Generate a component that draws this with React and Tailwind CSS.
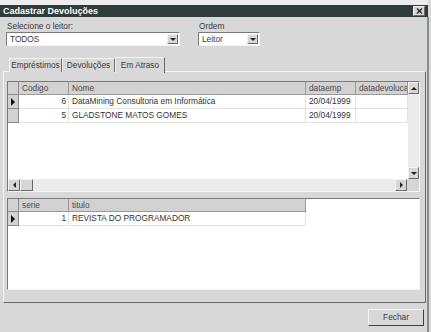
import React from "react";

const raised = "border border-t-[#f4f4f4] border-l-[#f4f4f4] border-r-[#6a6a6a] border-b-[#6a6a6a]";
const sunken = "border border-t-[#7a7a7a] border-l-[#7a7a7a] border-r-[#f4f4f4] border-b-[#f4f4f4]";

function TriDown() {
  return <div className="w-0 h-0 border-x-[3px] border-x-transparent border-t-[3px] border-t-[#222]" />;
}
function TriUp() {
  return <div className="w-0 h-0 border-x-[3px] border-x-transparent border-b-[3px] border-b-[#222]" />;
}
function TriRight({ big }) {
  return big ? (
    <div className="w-0 h-0 border-y-[4px] border-y-transparent border-l-[4px] border-l-[#111]" />
  ) : (
    <div className="w-0 h-0 border-y-[3px] border-y-transparent border-l-[3px] border-l-[#222]" />
  );
}
function TriLeft() {
  return <div className="w-0 h-0 border-y-[3px] border-y-transparent border-r-[3px] border-r-[#222]" />;
}

function Combo({ w, text }) {
  return (
    <div className={`${sunken} h-[14px] bg-white flex items-stretch`} style={{ width: w }}>
      <div className="flex-1 flex items-center pl-[3px] text-[#3a3a3a]">{text}</div>
      <div className={`${raised} w-[11px] bg-[#d6d6d6] flex items-center justify-center m-[1px]`}>
        <TriDown />
      </div>
    </div>
  );
}

function Tab({ label, active, w }) {
  return (
    <div
      className={`${active ? "h-[16px] z-10 -mb-[1px] bg-[#d8d8d8]" : "h-[14px] bg-[#d8d8d8]"} border border-b-0 border-t-[#f4f4f4] border-l-[#f4f4f4] border-r-[#6a6a6a] flex items-center justify-center text-[#3a3a3a]`}
      style={{ width: w }}
    >
      {label}
    </div>
  );
}

function HeadCell({ w, children }) {
  return (
    <div
      className="h-full bg-[#d2d2d2] border-r border-b border-r-[#9a9a9a] border-b-[#9a9a9a] flex items-center pl-[3px] overflow-hidden whitespace-nowrap text-[#4a4a4a]"
      style={{ width: w }}
    >
      {children}
    </div>
  );
}

function Cell({ w, right, children }) {
  return (
    <div
      className={`h-full border-r border-b border-r-[#e2e2e2] border-b-[#e2e2e2] flex items-center overflow-hidden whitespace-nowrap text-[#333] ${right ? "justify-end pr-[2px]" : "pl-[3px]"}`}
      style={{ width: w }}
    >
      {children}
    </div>
  );
}

function Indicator({ head, cur }) {
  return (
    <div className="w-[11px] h-full bg-[#d2d2d2] border-r border-b border-r-[#8a8a8a] border-b-[#8a8a8a] flex items-center justify-center">
      {cur && <TriRight big />}
      {head && null}
    </div>
  );
}

function ScrollBtn({ children, cls }) {
  return (
    <div className={`${raised} bg-[#d6d6d6] flex items-center justify-center ${cls}`}>{children}</div>
  );
}

export default function App() {
  const upperCols = [50, 237, 50, 52];
  return (
    <div
      className="w-[431px] h-[332px] bg-[#d8d8d8] overflow-hidden flex flex-col text-[8.3px] leading-none"
      style={{ fontFamily: '"Liberation Sans", Arial, sans-serif' }}
    >
      <div className="h-[5px] bg-[#ececec] mr-[3px]" />
      <div className="h-[12px] mr-[3px] bg-[#303c3b] flex items-center justify-between pl-[3px] pr-[3px]">
        <span className="text-white font-bold text-[9px]">Cadastrar Devoluções</span>
        <div className={`${raised} w-[12px] h-[10px] bg-[#d6d6d6] flex items-center justify-center`}>
          <svg width="7" height="6" viewBox="0 0 7 6">
            <path d="M1 0.5 L6 5.5 M6 0.5 L1 5.5" stroke="#222" strokeWidth="1.3" />
          </svg>
        </div>
      </div>
      <div className="flex-1 flex flex-col mr-[2px] border-r-[2px] border-r-[#8c8c8c]">
        <div className="flex pl-[6px] pt-[4px]">
          <div className="w-[192px] flex flex-col">
            <div className="h-[10px] flex items-center pl-[1px] mb-[1px] text-[#3a3a3a]">Selecione o leitor:</div>
            <Combo w={174} text="TODOS" />
          </div>
          <div className="flex flex-col">
            <div className="h-[10px] flex items-center pl-[1px] mb-[1px] text-[#3a3a3a]">Ordem</div>
            <Combo w={62} text="Leitor" />
          </div>
        </div>

        <div className="ml-[3px] w-[423px] mt-[10px] flex flex-col">
          <div className="h-[16px] flex items-end pl-[6px] relative z-10">
            <Tab label="Empréstimos" w={53} />
            <Tab label="Devoluções" w={53} />
            <Tab label="Em Atraso" active w={50} />
          </div>
          <div className={`${raised} h-[232px] -mt-[1px] flex flex-col pl-[3px] pt-[9px]`}>
            {/* upper grid */}
            <div className={`${sunken} w-[413px] h-[111px] bg-white flex flex-col`}>
              <div className="flex flex-1 min-h-0">
                <div className="w-[400px] flex flex-col">
                  <div className="h-[13px] flex">
                    <Indicator head />
                    <HeadCell w={upperCols[0]}>Codigo</HeadCell>
                    <HeadCell w={upperCols[1]}>Nome</HeadCell>
                    <HeadCell w={upperCols[2]}>dataemp</HeadCell>
                    <HeadCell w={upperCols[3]}>datadevolucao</HeadCell>
                  </div>
                  <div className="h-[14px] flex">
                    <Indicator cur />
                    <Cell w={upperCols[0]} right>6</Cell>
                    <Cell w={upperCols[1]}>DataMining Consultoria em Informática</Cell>
                    <Cell w={upperCols[2]}>20/04/1999</Cell>
                    <Cell w={upperCols[3]}></Cell>
                  </div>
                  <div className="h-[14px] flex">
                    <Indicator />
                    <Cell w={upperCols[0]} right>5</Cell>
                    <Cell w={upperCols[1]}>GLADSTONE MATOS GOMES</Cell>
                    <Cell w={upperCols[2]}>20/04/1999</Cell>
                    <Cell w={upperCols[3]}></Cell>
                  </div>
                </div>
                <div className="w-[12px] bg-[#ebebeb] flex flex-col">
                  <ScrollBtn cls="h-[12px]"><TriUp /></ScrollBtn>
                  <div className="flex-1" />
                  <ScrollBtn cls="h-[12px]"><TriDown /></ScrollBtn>
                </div>
              </div>
              <div className="h-[12px] flex">
                <div className="w-[400px] bg-[#ebebeb] flex">
                  <ScrollBtn cls="w-[12px]"><TriLeft /></ScrollBtn>
                  <ScrollBtn cls="w-[13px]" />
                  <div className="flex-1" />
                  <ScrollBtn cls="w-[12px]"><TriRight /></ScrollBtn>
                </div>
                <div className="w-[12px] bg-[#d6d6d6]" />
              </div>
            </div>

            {/* lower grid */}
            <div className={`${sunken} w-[413px] h-[92px] bg-white flex flex-col mt-[6px]`}>
              <div className="h-[13px] flex">
                <Indicator head />
                <HeadCell w={50}>serie</HeadCell>
                <HeadCell w={237}>titulo</HeadCell>
              </div>
              <div className="h-[14px] flex">
                <Indicator cur />
                <Cell w={50} right>1</Cell>
                <Cell w={237}>REVISTA DO PROGRAMADOR</Cell>
              </div>
            </div>
          </div>
        </div>

        <div className="flex justify-end mt-[6px] pr-[3px]">
          <div className={`${raised} w-[56px] h-[17px] flex items-center justify-center text-[#3a3a3a] border-r-[#404040] border-b-[#404040]`}>
            Fechar
          </div>
        </div>
      </div>
    </div>
  );
}
